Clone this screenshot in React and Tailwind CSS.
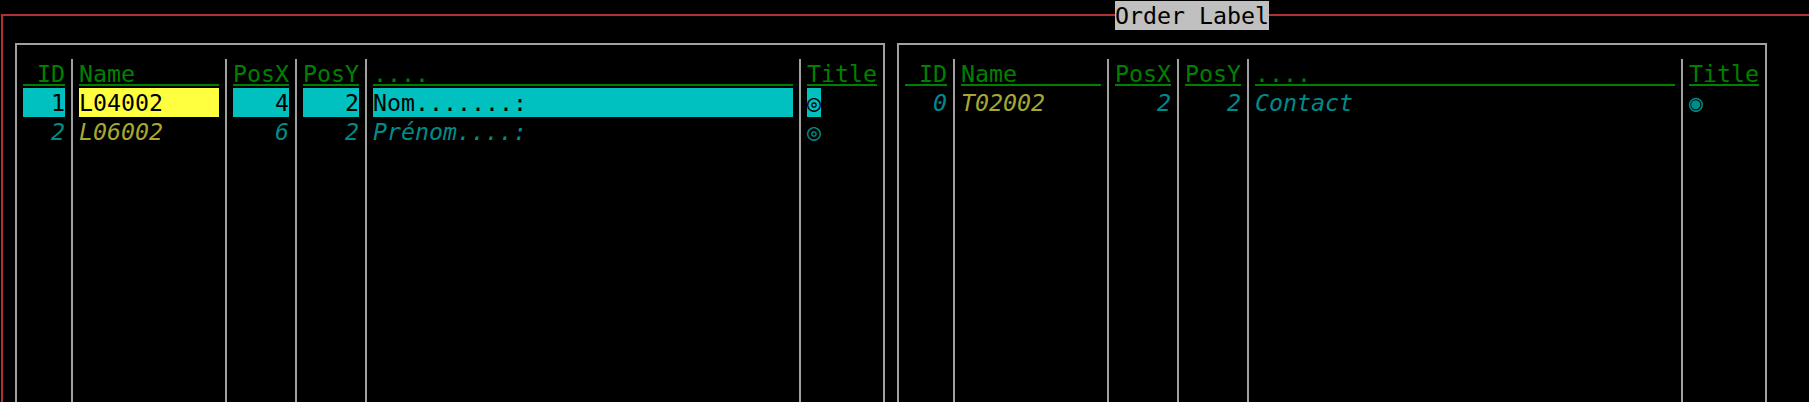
import React from 'react';

// terminal grid: 14px cells, 29px rows
const COLUMNS = [
    { key: 'id', w: 'w-[42px]', head: 'ID', right: true },
    { key: 'name', w: 'w-[140px]', head: 'Name' },
    { key: 'x', w: 'w-[56px]', head: 'PosX', right: true },
    { key: 'y', w: 'w-[56px]', head: 'PosY', right: true },
    { key: 'text', w: 'w-[420px]', head: '....' },
    { key: 'title', w: 'w-[70px]', head: 'Title' },
];

const LEFT_ROWS = [
    { id: '1', name: 'L04002', x: '4', y: '2', text: 'Nom.......:', title: '◎', selected: true },
    { id: '2', name: 'L06002', x: '6', y: '2', text: 'Prénom....:', title: '◎' },
];

const RIGHT_ROWS = [
    { id: '0', name: 'T02002', x: '2', y: '2', text: 'Contact', title: '◉' },
];

function Separator() {
    return (
        <div className="w-[14px] flex justify-center">
            <div className="w-[2px] bg-[#a0a0a0]" />
        </div>
    );
}

function DataCell({ col, row }) {
    const value = row[col.key];
    const align = col.right ? 'text-right' : 'text-left';

    if (col.key === 'title') {
        return (
            <div className="h-[29px] leading-[29px] whitespace-pre">
                <span
                    className={
                        row.selected
                            ? 'inline-block w-[14px] bg-[#00c0c0] text-black'
                            : 'inline-block w-[14px] text-[#008b8b]'
                    }
                >
                    {value}
                </span>
            </div>
        );
    }

    if (row.selected) {
        const bg = col.key === 'name' ? 'bg-[#ffff40]' : 'bg-[#00c0c0]';
        return (
            <div className={`h-[29px] leading-[29px] whitespace-pre text-black ${bg} ${align}`}>
                {value}
            </div>
        );
    }

    const color = col.key === 'name' ? 'text-[#a8a830]' : 'text-[#008b8b]';
    return (
        <div className={`h-[29px] leading-[29px] whitespace-pre italic ${color} ${align}`}>
            {value}
        </div>
    );
}

function Panel({ rows }) {
    return (
        <div className="w-[870px] h-[420px] shrink-0 border-2 border-[#a0a0a0] pt-[14px] px-[6px] flex">
            {COLUMNS.map((col, i) => (
                <React.Fragment key={col.key}>
                    {i > 0 && <Separator />}
                    <div className={`${col.w} flex flex-col`}>
                        <div className="h-[29px]">
                            <div
                                className={`h-[27px] border-b-2 border-[#008000] leading-[29px] text-[#008000] whitespace-pre ${
                                    col.right ? 'text-right' : 'text-left'
                                }`}
                            >
                                {col.head}
                            </div>
                        </div>
                        {rows.map((row, r) => (
                            <DataCell key={r} col={col} row={row} />
                        ))}
                    </div>
                </React.Fragment>
            ))}
        </div>
    );
}

export default function App() {
    return (
        <div className="w-[1809px] h-[402px] overflow-hidden bg-black font-['DejaVu_Sans_Mono','Liberation_Mono',monospace] text-[23.25px]">
            <div className="relative ml-[1px] mt-[14px] w-[1900px] h-[500px] border-l-2 border-t-2 border-[#b33030] pl-[12px] pt-[27px] flex gap-[12px]">
                {/* window title over the frame line */}
                <div className="absolute left-[1112px] top-[-15px] h-[29px] w-[154px] bg-[#c0c0c0] text-black leading-[29px] whitespace-pre">
                    Order Label
                </div>
                <Panel rows={LEFT_ROWS} />
                <Panel rows={RIGHT_ROWS} />
            </div>
        </div>
    );
}
